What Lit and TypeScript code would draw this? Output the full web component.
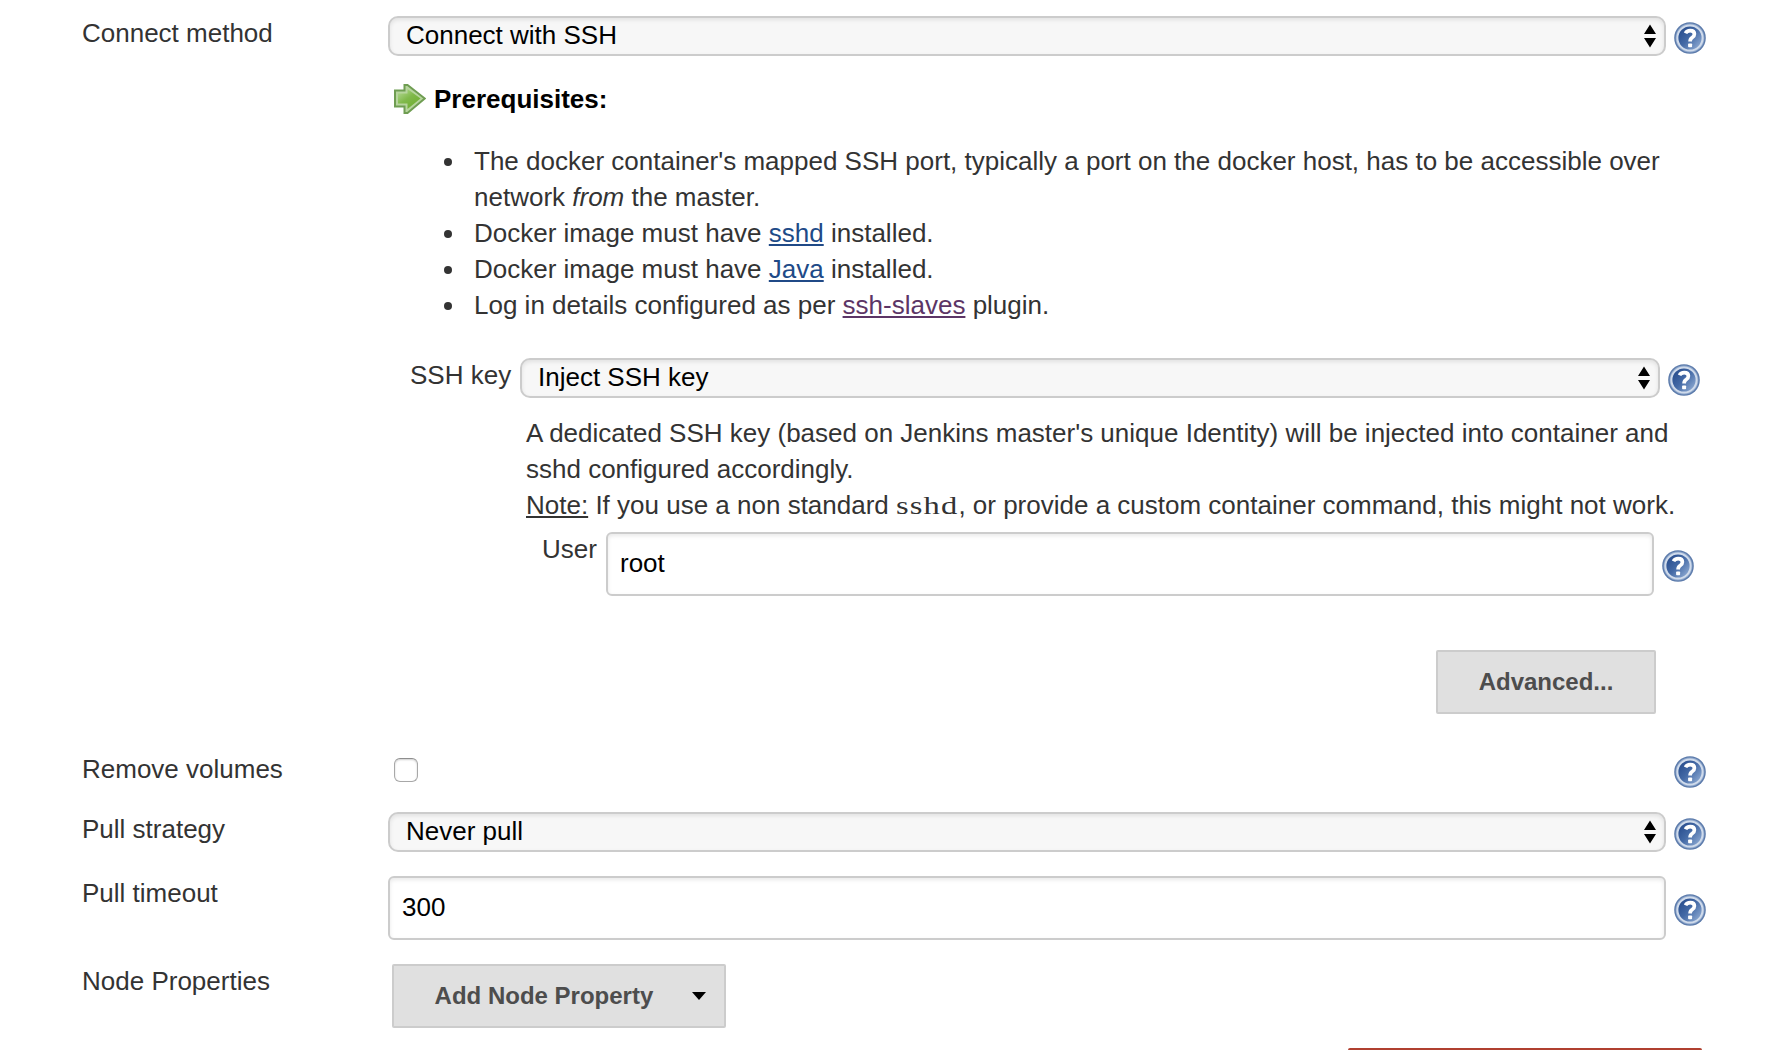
import { LitElement, html, css } from "lit";
import { customElement, property } from "lit/decorators.js";

@customElement("help-icon")
class HelpIcon extends LitElement {
  static styles = css`
    :host { display: block; width: 32px; height: 32px; flex: none; }
    svg { display: block; }
  `;
  render() {
    return html`<svg width="32" height="32" viewBox="0 0 32 32">
      <defs>
        <linearGradient id="disc" x1="0.1" y1="0.2" x2="0.9" y2="0.9">
          <stop offset="0" stop-color="#2a4f8f" />
          <stop offset="0.45" stop-color="#446aa6" />
          <stop offset="1" stop-color="#8fabd3" />
        </linearGradient>
      </defs>
      <circle cx="16" cy="16" r="15.8" fill="#5c7bab" />
      <circle cx="16" cy="16" r="14.4" fill="#8da6cb" />
      <circle cx="16" cy="16" r="12.6" fill="url(#disc)" stroke="#d0dbeb" stroke-width="2" />
      <path d="M11.5 11.3Q12.8 8.6 16.2 8.6Q20.4 8.6 20.4 12.1Q20.4 14.2 18.3 15.5Q16.1 16.8 16.1 19.4" fill="none" stroke="#fff" stroke-width="3.7" />
      <rect x="14.1" y="21.5" width="4" height="3.8" rx="0.8" fill="#fff" />
    </svg>`;
  }
}

@customElement("select-box")
class SelectBox extends LitElement {
  @property() value = "";
  static styles = css`
    :host {
      display: flex; box-sizing: border-box; height: 40px; flex: 1;
      align-items: flex-start; justify-content: space-between;
      border: 2px solid #ccc; border-radius: 10px; background: #f7f7f7;
      box-shadow: inset 0 2px 4px rgba(0, 0, 0, 0.09);
      padding: 2px 8px 0 16px; color: #000; line-height: 30px;
    }
    svg { display: block; margin-top: 4px; }
  `;
  render() {
    return html`<span>${this.value}</span>
      <svg width="12" height="24" viewBox="0 0 12 24"><path d="M0 10 6 0.5 12 10ZM0 14H12L6 23.5Z" /></svg>`;
  }
}

@customElement("app-root")
class AppRoot extends LitElement {
  static styles = css`
    :host {
      display: block; box-sizing: border-box; width: 1782px; height: 1050px; overflow: hidden;
      background: #fff; color: #333; padding: 16px 76px 0 82px;
      font: 26px/36px "Liberation Sans", Arial, sans-serif;
    }
    .row { display: flex; align-items: flex-start; }
    .label { width: 306px; flex: none; line-height: 34px; }
    .key-label { width: 110px; flex: none; line-height: 34px; }
    .user-label { width: 64px; flex: none; line-height: 34px; }
    .remove .label { line-height: 26px; }
    .help { margin-top: 6px; margin-left: 8px; }
    .help-tall { margin-top: 18px; margin-left: 8px; }
    .body { padding-left: 306px; }
    .prereq { display: flex; align-items: center; gap: 8px; padding: 28px 0 0 6px; height: 30px; color: #000; font-weight: bold; }
    .prereq svg { display: block; }
    ul { margin: 29px 0 0; padding: 0 0 0 56px; list-style: none; }
    li { display: flex; white-space: nowrap; }
    .dot { width: 8px; height: 8px; margin: 15px 22px 0 0; border-radius: 50%; background: #333; flex: none; }
    a, u { text-decoration: underline; text-decoration-thickness: 2px; text-underline-offset: 2px; }
    a { color: #204a87; }
    .visited { color: #5c3566; }
    .key-row { padding: 35px 6px 0 22px; }
    .note { padding: 17px 0 0 138px; white-space: nowrap; }
    code {
      display: inline-block; font-family: "Liberation Serif", "Times New Roman", serif; font-size: 26px; line-height: 1;
      letter-spacing: 0.9px; margin-right: 12.5px; transform: scaleX(1.25); transform-origin: left;
    }
    .user-row { padding: 9px 12px 0 154px; }
    .input {
      flex: 1; box-sizing: border-box; height: 64px; border: 2px solid #ccc; border-radius: 6px;
      background: #fff; box-shadow: inset 0 2px 4px rgba(0, 0, 0, 0.09);
      color: #000; padding: 14px 12px; line-height: 30px;
    }
    .button {
      box-sizing: border-box; height: 64px; border: 2px solid #ccc; border-radius: 2px;
      background: #e0e0e0; color: #4d4d4d; font-size: 24px; font-weight: bold; line-height: 60px;
    }
    .advanced { width: 220px; text-align: center; margin: 54px 50px 0 auto; }
    .remove { padding-top: 42px; }
    .check {
      width: 24px; height: 24px; box-sizing: border-box; margin: 2px auto 0 6px;
      border: 1px solid #a8a8a8; border-top-color: #8e8e8e; border-radius: 6px; background: #fff;
      box-shadow: inset 0 1px 2px rgba(0, 0, 0, 0.2);
    }
    .strategy, .timeout, .node { padding-top: 24px; }
    .add { width: 334px; margin-left: 4px; padding: 0 18px 0 40.6px; display: flex; align-items: center; justify-content: space-between; }
    .strip { width: 354px; height: 40px; margin: 20px 4px 0 auto; background: #b04030; border-radius: 2px; }
  `;
  render() {
    return html`
      <div class="row">
        <div class="label">Connect method</div>
        <select-box value="Connect with SSH"></select-box>
        <help-icon class="help"></help-icon>
      </div>
      <div class="body">
        <div class="prereq">
          <svg width="32" height="30" viewBox="0 0 32 30">
            <defs>
              <linearGradient id="leaf" x1="0" y1="0" x2="0.8" y2="1">
                <stop offset="0" stop-color="#b9dc9a" />
                <stop offset="0.5" stop-color="#80b94b" />
                <stop offset="1" stop-color="#6dad2d" />
              </linearGradient>
            </defs>
            <path d="M1 6.5H10.5V1H13.5L30.8 14.5 13.5 29H10.5V22.5H1Z" fill="#b7d59e" stroke="#6f9d52" stroke-width="2" />
            <path d="M4 9.5H13.5V5L26.5 14.6 13.5 25V19.5H4Z" fill="url(#leaf)" />
          </svg>
          <span>Prerequisites:</span>
        </div>
        <ul>
          <li><i class="dot"></i><span>The docker container's mapped SSH port, typically a port on the docker host, has to be accessible over<br />network <em>from</em> the master.</span></li>
          <li><i class="dot"></i><span>Docker image must have <a>sshd</a> installed.</span></li>
          <li><i class="dot"></i><span>Docker image must have <a>Java</a> installed.</span></li>
          <li><i class="dot"></i><span>Log in details configured as per <a class="visited">ssh-slaves</a> plugin.</span></li>
        </ul>
        <div class="row key-row">
          <div class="key-label">SSH key</div>
          <select-box value="Inject SSH key"></select-box>
          <help-icon class="help"></help-icon>
        </div>
        <div class="note">
          A dedicated SSH key (based on Jenkins master's unique Identity) will be injected into container and<br />sshd configured accordingly.<br /><u>Note:</u> If you use a non standard <code>sshd</code>, or provide a custom container command, this might not work.
        </div>
        <div class="row user-row">
          <div class="user-label">User</div>
          <div class="input">root</div>
          <help-icon class="help-tall"></help-icon>
        </div>
      </div>
      <div class="button advanced">Advanced...</div>
      <div class="row remove">
        <div class="label">Remove volumes</div>
        <div class="check"></div>
        <help-icon></help-icon>
      </div>
      <div class="row strategy">
        <div class="label">Pull strategy</div>
        <select-box value="Never pull"></select-box>
        <help-icon class="help"></help-icon>
      </div>
      <div class="row timeout">
        <div class="label">Pull timeout</div>
        <div class="input">300</div>
        <help-icon class="help-tall"></help-icon>
      </div>
      <div class="row node">
        <div class="label">Node Properties</div>
        <div class="button add">
          <span>Add Node Property</span>
          <svg width="14" height="8" viewBox="0 0 14 8"><path d="M0 0H14L7 8Z" /></svg>
        </div>
      </div>
      <div class="strip"></div>
    `;
  }
}
